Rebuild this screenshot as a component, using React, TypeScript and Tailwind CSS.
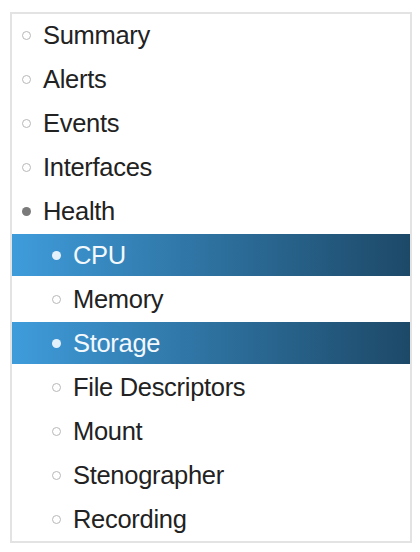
import React from "react";

type Item = { label: string; level: 0 | 1; state: "empty" | "filled" | "active" };

const items: Item[] = [
  { label: "Summary", level: 0, state: "empty" },
  { label: "Alerts", level: 0, state: "empty" },
  { label: "Events", level: 0, state: "empty" },
  { label: "Interfaces", level: 0, state: "empty" },
  { label: "Health", level: 0, state: "filled" },
  { label: "CPU", level: 1, state: "active" },
  { label: "Memory", level: 1, state: "empty" },
  { label: "Storage", level: 1, state: "active" },
  { label: "File Descriptors", level: 1, state: "empty" },
  { label: "Mount", level: 1, state: "empty" },
  { label: "Stenographer", level: 1, state: "empty" },
  { label: "Recording", level: 1, state: "empty" },
];

function Dot({ state }: { state: Item["state"] }) {
  if (state === "active")
    return <span className="block w-[9px] h-[9px] rounded-full bg-[#e4f1fb] shrink-0" />;
  if (state === "filled")
    return <span className="block w-[9px] h-[9px] rounded-full bg-[#7a7a7a] shrink-0" />;
  return (
    <span className="block w-[9px] h-[9px] rounded-full border-[1.5px] border-[#b8b8b8] shrink-0" />
  );
}

export default function App() {
  return (
    <div className="w-[420px] h-[552px] bg-white pt-[12px] pl-[10px]">
      <div
        className="w-[402px] border-2 border-[#e3e3e3] pb-[1px] flex flex-col gap-[2px]"
        style={{ fontFamily: '"Liberation Sans", Arial, sans-serif' }}
      >
        {items.map((it) => (
          <div
            key={it.label}
            className={
              "h-[42px] flex items-center gap-[12px] text-[25.5px] tracking-[-0.3px] " +
              (it.level === 0 ? "pl-[10px] " : "pl-[40px] ") +
              (it.state === "active"
                ? "bg-gradient-to-r from-[#3f9cdb] to-[#1d4968] text-[#f2f8fc]"
                : "text-[#222222]")
            }
          >
            <Dot state={it.state} />
            <span className="leading-none pt-[1px]">{it.label}</span>
          </div>
        ))}
      </div>
    </div>
  );
}
